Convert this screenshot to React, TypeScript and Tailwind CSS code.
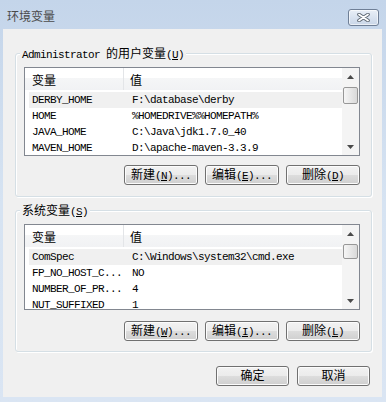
import type { ReactNode } from 'react';

const MONO = "font-['Liberation_Mono','Noto_Sans_CJK_SC',monospace] text-[11px] tracking-[-0.6px]";
const CJK = "font-['Noto_Sans_CJK_SC',sans-serif] text-[12px] tracking-normal";

const userVars: [string, string][] = [
  ['DERBY_HOME', 'F:\\database\\derby'],
  ['HOME', '%HOMEDRIVE%%HOMEPATH%'],
  ['JAVA_HOME', 'C:\\Java\\jdk1.7.0_40'],
  ['MAVEN_HOME', 'D:\\apache-maven-3.3.9'],
];

const systemVars: [string, string][] = [
  ['ComSpec', 'C:\\Windows\\system32\\cmd.exe'],
  ['FP_NO_HOST_C...', 'NO'],
  ['NUMBER_OF_PR...', '4'],
  ['NUT_SUFFIXED', '1'],
];

function Zh({ children }: { children: ReactNode }) {
  return <span className={CJK}>{children}</span>;
}

function Key({ k }: { k: string }) {
  return (
    <>
      (<span className="underline underline-offset-[1px]">{k}</span>)
    </>
  );
}

function WinButton({ children, className = 'w-[74px]' }: { children: ReactNode; className?: string }) {
  return (
    <button
      className={`flex h-[20px] items-center justify-center rounded-[3px] border border-[#707070] bg-[linear-gradient(#f2f2f2_0%,#ebebeb_50%,#dddddd_50%,#cfcfcf_100%)] leading-[16px] text-black shadow-[inset_0_0_0_1px_#fcfcfc] ${className}`}
    >
      <span className="whitespace-nowrap">{children}</span>
    </button>
  );
}

function Arrow({ up }: { up?: boolean }) {
  return (
    <svg width="7" height="4" viewBox="0 0 7 4">
      <polygon points={up ? '3.5,0 7,4 0,4' : '0,0 7,0 3.5,4'} fill="#4a4a4a" />
    </svg>
  );
}

function ScrollBar({ thumb }: { thumb: string }) {
  return (
    <div className="flex w-[17px] flex-col bg-[#f4f4f4]">
      <div className="flex h-[17px] items-center justify-center">
        <Arrow up />
      </div>
      <div className="flex-1">
        <div
          className={`ml-[1px] mt-[2px] w-[15px] rounded-[2px] border border-[#979797] bg-gradient-to-r from-[#f6f6f6] to-[#d9d9d9] ${thumb}`}
        />
      </div>
      <div className="flex h-[17px] items-center justify-center">
        <Arrow />
      </div>
    </div>
  );
}

function VarList({ rows, height, thumb }: { rows: [string, string][]; height: string; thumb: string }) {
  return (
    <div className={`flex border border-[#828790] bg-white ${height}`}>
      <div className="flex-1 overflow-hidden">
        <div className="flex h-[22px] bg-[linear-gradient(#ffffff_0%,#ffffff_45%,#f5f6f7_45%,#f1f2f4_100%)] leading-[14px]">
          <div className="w-[99px] border-r border-[#e3e5e8] pl-[7px] pt-[5px]">
            <Zh>变量</Zh>
          </div>
          <div className="pl-[6px] pt-[5px]">
            <Zh>值</Zh>
          </div>
        </div>
        <div className="pt-[2px]">
          {rows.map(([name, value], i) => (
            <div
              key={name}
              className={`ml-[4px] flex h-[16px] leading-[16px] text-black ${i === 0 ? 'bg-[#f0f0f0]' : ''}`}
            >
              <div className="w-[96px] whitespace-nowrap pl-[3px]">{name}</div>
              <div className="whitespace-nowrap pl-[7px]">{value}</div>
            </div>
          ))}
        </div>
      </div>
      <ScrollBar thumb={thumb} />
    </div>
  );
}

function Group({ label, children, className }: { label: ReactNode; children: ReactNode; className: string }) {
  return (
    <div
      className={`relative rounded-[3px] border border-[#d5dfe5] pl-[8px] pr-[11px] shadow-[1px_1px_0_#ffffff,inset_1px_1px_0_#ffffff] ${className}`}
    >
      <div className="absolute left-[4px] top-[-8px] whitespace-nowrap bg-[#f0f0f0] px-[2px] leading-[14px] text-black">
        {label}
      </div>
      {children}
    </div>
  );
}

export default function App() {
  return (
    <div
      className={`flex h-[402px] w-[386px] flex-col bg-gradient-to-b from-[#c4d5ea] via-[#d6e3f2] to-[#dae5f3] ${MONO}`}
    >
      <div className="flex h-[29px] shrink-0 items-start justify-between">
        <div className="ml-[7px] mt-[9px] leading-[14px] text-[#4a4a4a]">
          <Zh>环境变量</Zh>
        </div>
        <button className="mr-[7px] mt-[9px] flex h-[17px] w-[31px] items-center justify-center rounded-[3px] border border-[#6f7f96] bg-gradient-to-b from-[#e9eff7] to-[#c9d6e8] shadow-[inset_0_0_0_1px_rgba(255,255,255,0.6)]">
          <svg width="13" height="9" viewBox="0 0 13 9">
            <path d="M2 1.5 L11 7.5 M11 1.5 L2 7.5" stroke="#5a6470" strokeWidth="3.6" strokeLinecap="round" />
            <path d="M2 1.5 L11 7.5 M11 1.5 L2 7.5" stroke="#ffffff" strokeWidth="1.8" strokeLinecap="round" />
          </svg>
        </button>
      </div>

      <div className="mb-[5px] ml-[3px] mr-[4px] flex h-[368px] flex-col bg-[#f0f0f0] pl-[12px] pr-[10px] pt-[24px]">
        <Group
          className="h-[144px] pt-[13px]"
          label={
            <>
              Administrator <Zh>的用户变量</Zh>
              <Key k="U" />
            </>
          }
        >
          <VarList rows={userVars} height="h-[89px]" thumb="h-[17px]" />
          <div className="mt-[9px] flex justify-end gap-[7px]">
            <WinButton>
              <Zh>新建</Zh>
              <Key k="N" />
              ...
            </WinButton>
            <WinButton>
              <Zh>编辑</Zh>
              <Key k="E" />
              ...
            </WinButton>
            <WinButton>
              <Zh>删除</Zh>
              <Key k="D" />
            </WinButton>
          </div>
        </Group>

        <Group
          className="mt-[13px] h-[142px] pt-[13px]"
          label={
            <>
              <Zh>系统变量</Zh>
              <Key k="S" />
            </>
          }
        >
          <VarList rows={systemVars} height="h-[86px]" thumb="h-[15px]" />
          <div className="mt-[11px] flex justify-end gap-[7px]">
            <WinButton>
              <Zh>新建</Zh>
              <Key k="W" />
              ...
            </WinButton>
            <WinButton>
              <Zh>编辑</Zh>
              <Key k="I" />
              ...
            </WinButton>
            <WinButton>
              <Zh>删除</Zh>
              <Key k="L" />
            </WinButton>
          </div>
        </Group>

        <div className="mr-[2px] mt-[14px] flex justify-end gap-[8px]">
          <WinButton className="w-[73px]">
            <Zh>确定</Zh>
          </WinButton>
          <WinButton className="w-[73px]">
            <Zh>取消</Zh>
          </WinButton>
        </div>
      </div>
    </div>
  );
}
